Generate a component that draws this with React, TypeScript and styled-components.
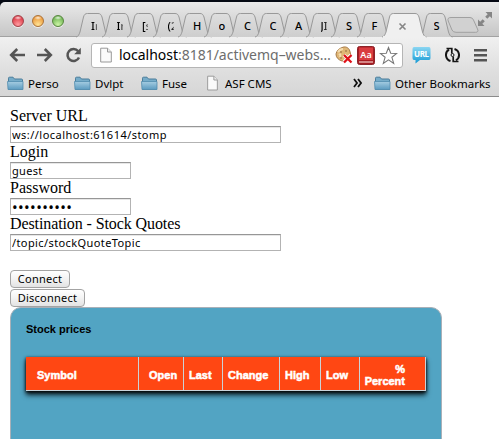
import React from "react";
import styled, { createGlobalStyle } from "styled-components";

const GlobalStyle = createGlobalStyle`
  * { box-sizing: border-box; }
  html, body { margin: 0; padding: 0; background: #fff; overflow: hidden; }
`;

const uiFont = `"Noto Sans", "Open Sans", sans-serif`;

const Window = styled.div`
  width: 499px;
  height: 439px;
  overflow: hidden;
  background: #fff;
  font-family: ${uiFont};
  color: #000;
`;

const Desktop = styled.div`
  height: 37px;
  padding-top: 2px;
  background: #060a14;
`;

const TitleBar = styled.div`
  display: flex;
  align-items: flex-end;
  height: 35px;
  padding-left: 12px;
  border-top-left-radius: 5px;
  background: linear-gradient(#eaeaea, #d9d9d9 45%, #c5c5c5);
  box-shadow: inset 0 -1px #a2a2a2;
`;

const Lights = styled.div`
  display: flex;
  gap: 8px;
  width: 68px;
  padding-bottom: 10px;
`;

const Light = styled.i<{ $rim: string; $mid: string; $glow: string }>`
  width: 12px;
  height: 12px;
  border-radius: 50%;
  border: 1px solid ${(p) => p.$rim};
  background: radial-gradient(ellipse 4px 2px at 50% 18%, #fffc, #fff0),
    radial-gradient(circle at 50% 85%, ${(p) => p.$glow}, ${(p) => p.$mid} 75%);
  box-shadow: 0 1px 0 #eee;
`;

const Tab = styled.div<{ $active?: boolean }>`
  position: relative;
  flex: none;
  width: ${(p) => (p.$active ? 36.5 : 25.5)}px;
  height: 24px;
  z-index: ${(p) => (p.$active ? 1 : 0)};
`;

const TabShape = styled.svg`
  position: absolute;
  left: -4px;
  top: 0;
  overflow: visible;
`;

const TabLabel = styled.span<{ $fade?: boolean }>`
  position: relative;
  display: block;
  width: 9px;
  height: 24px;
  margin-left: 11px;
  overflow: hidden;
  font-size: 11px;
  font-weight: 500;
  line-height: 25px;
  white-space: nowrap;
  ${(p) => p.$fade && "width: 6px; mask-image: linear-gradient(90deg, #000 65%, #0006);"}
`;

const CloseIcon = styled.svg`
  position: relative;
  display: block;
  margin: 9px 0 0 12px;
`;

const NewTab = styled.svg`
  flex: none;
  margin: 0 -2px 4px -1px;
`;

const Expand = styled.svg`
  flex: none;
  margin-bottom: 10px;
`;

const Chrome = styled.div`
  height: 60px;
  background: linear-gradient(#f0f0f0, #dedede 60%, #d6d6d6);
  border-bottom: 1px solid #8b8b8b;
`;

const Toolbar = styled.div`
  display: flex;
  align-items: center;
  height: 36px;
  padding: 0 9px;
`;

const NavIcons = styled.div`
  display: flex;
  gap: 12px;
  width: 82px;
`;

const Omnibox = styled.div`
  display: flex;
  align-items: center;
  flex: none;
  width: 312px;
  height: 25px;
  padding: 0 4px 0 8px;
  background: #fff;
  border: 1px solid #b5b5b5;
  border-radius: 3px;
`;

const Address = styled.div`
  flex: 1;
  min-width: 0;
  margin-left: 7px;
  font-size: 14px;
  letter-spacing: -0.02px;
  line-height: 20px;
  white-space: nowrap;
  color: #6d6d6d;
`;

const Host = styled.span`
  color: #000;
`;

const OmniActions = styled.div`
  display: flex;
  align-items: center;
  gap: 4px;
`;

const Extensions = styled.div`
  display: flex;
  align-items: center;
  gap: 14px;
  margin-left: 9px;
`;

const Bookmarks = styled.div`
  display: flex;
  align-items: center;
  height: 20px;
  padding-left: 7px;
`;

const Bookmark = styled.div<{ $w: number; $space?: number }>`
  display: flex;
  align-items: center;
  flex: none;
  gap: 4px;
  width: ${(p) => p.$w}px;
  font-size: 11.5px;
  letter-spacing: ${(p) => p.$space ?? 0}px;
  white-space: nowrap;
`;

const Page = styled.main`
  padding: 10px 0 0 10px;
`;

const Field = styled.label<{ $space?: number }>`
  display: block;
  height: 36px;
  font: 16px/18px "Liberation Serif", serif;
  letter-spacing: ${(p) => p.$space ?? 0}px;
`;

const Input = styled.input<{ $w: number; $space?: number; $dots?: boolean }>`
  display: block;
  width: ${(p) => p.$w}px;
  height: 17px;
  margin-top: 1px;
  padding: 0 1px;
  border: 1px solid #b3b3b3;
  border-top-color: #969696;
  border-radius: 0;
  outline: none;
  box-shadow: inset 0 1px #e7e7e7;
  font: ${(p) => (p.$dots ? 15 : 11)}px/15px ${uiFont};
  letter-spacing: ${(p) => p.$space ?? 0}px;
  color: #000;
`;

const Buttons = styled.div`
  display: flex;
  flex-direction: column;
  align-items: flex-start;
  gap: 1px;
  padding-top: 19px;
`;

const Button = styled.button<{ $w: number }>`
  width: ${(p) => p.$w}px;
  height: 18px;
  padding: 0;
  border: 1px solid #a3a3a3;
  border-radius: 4px;
  background: linear-gradient(#fff, #f3f3f3 50%, #e3e3e3);
  font: 11px/16px ${uiFont};
  letter-spacing: 0.25px;
  color: #000;
`;

const Panel = styled.section`
  width: 432px;
  height: 150px;
  padding: 15px 15px 0;
  border: 1px solid #a9b0b8;
  border-radius: 11px;
  background: #52a4c3;
  font: bold 11px/12px "Liberation Sans", Arial, sans-serif;
`;

const PanelTitle = styled.h2`
  margin: 0 0 22px;
  font: inherit;
  line-height: 13px;
`;

const Header = styled.div`
  display: grid;
  grid-template-columns: 113px 45px 39px 57px 41px 39px 66px;
  width: 400px;
  height: 34px;
  margin-top: -1px;
  background: #ff4713;
  border-bottom: 1px solid #c9d3da;
  box-shadow: 0 4px 5px #000c, 0 1px 3px #000;
`;

const Cell = styled.div<{ $pad?: number; $right?: boolean }>`
  display: flex;
  align-items: center;
  justify-content: ${(p) => (p.$right ? "flex-end" : "flex-start")};
  padding: 3px ${(p) => (p.$right ? 20 : 0)}px 0 ${(p) => (p.$right ? 0 : p.$pad ?? 5)}px;
  border-right: 1px solid #cbd2d6;
  color: #fff;
  text-align: ${(p) => (p.$right ? "right" : "left")};
  -webkit-text-stroke: 0.5px #fff;
`;

const tabFill = (active?: boolean) => (active ? "#f0f0f0" : "url(#tabg)");

function BrowserTab({ text, active }: { text?: string; active?: boolean }) {
  const w = active ? 36.5 : 25.5;
  const d = `M0 24 C2.5 23.5 3 21.5 4 19 L7.5 4 C8.3 1.3 9.5 .5 11.5 .5 H${w - 3.5} C${w - 1.5} .5 ${w - 0.5} 1.3 ${w + 0.5} 4 L${w + 4} 19 C${w + 5} 21.5 ${w + 5.5} 23.5 ${w + 8} 24`;
  return (
    <Tab $active={active}>
      <TabShape width={w + 8} height="24">
        <defs>
          <linearGradient id="tabg" x1="0" y1="0" x2="0" y2="1">
            <stop offset="0" stopColor="#dedede" />
            <stop offset="1" stopColor="#cecece" />
          </linearGradient>
        </defs>
        <path d={d} fill={tabFill(active)} stroke="#999" />
        {active && <path d={`M1 24H${w + 7}`} stroke="#f0f0f0" strokeWidth="2" />}
      </TabShape>
      {active ? (
        <CloseIcon width="9" height="9" viewBox="0 0 9 9">
          <path d="M1.5 1.5 7.5 7.5M7.5 1.5 1.5 7.5" stroke="#858585" strokeWidth="1.6" />
        </CloseIcon>
      ) : (
        <TabLabel $fade={(text ?? "").length > 1}>{text}</TabLabel>
      )}
    </Tab>
  );
}

const Folder = () => (
  <svg width="17" height="15" viewBox="0 0 17 15">
    <defs>
      <linearGradient id="fold" x1="0" y1="0" x2="0" y2="1">
        <stop offset="0" stopColor="#a6cde2" />
        <stop offset="1" stopColor="#5c9bc0" />
      </linearGradient>
    </defs>
    <path d="M1.5 13V2.2Q1.5 1.2 2.5 1.2H6L7.5 3H14.5Q15.5 3 15.5 4V13Z" fill="#76acc9" stroke="#4b7d9b" />
    <path d="M.5 5.5H16V13.5H1Z" fill="url(#fold)" stroke="#508bad" strokeWidth=".8" />
  </svg>
);

const Doc = ({ w = 12 }: { w?: number }) => (
  <svg width={w} height="16" viewBox="0 0 12 16" preserveAspectRatio="none">
    <path d="M.7 1.2H7.5L11.3 5V15H.7Z" fill="#fafafa" stroke="#999" />
    <path d="M7.5 1.2V5H11.3" fill="#eee" stroke="#999" />
  </svg>
);

const tabs = ["Ir", "Ir", "[s", "(2", "H", "o", "C", "C", "A", "JI", "S", "F"];

export default function App() {
  return (
    <Window>
      <GlobalStyle />
      <Desktop>
        <TitleBar>
          <Lights>
            <Light $rim="#a34148" $mid="#dd3c48" $glow="#ff9ba0" />
            <Light $rim="#ac7339" $mid="#eb9a3c" $glow="#ffe395" />
            <Light $rim="#58863f" $mid="#70b554" $glow="#ccf5a5" />
          </Lights>
          {tabs.map((t, i) => (
            <BrowserTab key={i} text={t} />
          ))}
          <BrowserTab active />
          <BrowserTab text="S" />
          <NewTab width="32" height="16" viewBox="0 0 32 16">
            <path d="M4 .5H23Q25.5.5 26.5 3L30.5 12Q32 15.3 28.5 15.3H9Q6 15.3 5 13L1.2 4Q0 .5 4 .5Z" fill="#d1d1d1" stroke="#a0a0a0" />
          </NewTab>
          <Expand width="16" height="16" viewBox="0 0 16 16">
            <path d="M8.5 1H15V7.5L12.8 5.3 10.3 7.8 8.2 5.7 10.7 3.2ZM7.5 15H1V8.5L3.2 10.7 5.7 8.2 7.8 10.3 5.3 12.8Z" fill="#858585" />
          </Expand>
        </TitleBar>
      </Desktop>
      <Chrome>
        <Toolbar>
          <NavIcons>
            <svg width="16" height="16" viewBox="0 0 16 16">
              <path d="M16 8H3M8.2 2 2.2 8 8.2 14" fill="none" stroke="#555" strokeWidth="2.6" />
            </svg>
            <svg width="16" height="16" viewBox="0 0 16 16">
              <path d="M0 8H13M7.8 2 13.8 8 7.8 14" fill="none" stroke="#555" strokeWidth="2.6" />
            </svg>
            <svg width="17" height="16" viewBox="0 0 17 16">
              <path d="M13.2 4.2A6 6 0 1 0 14 10.5" fill="none" stroke="#555" strokeWidth="2.5" />
              <path d="M15.8.8V7.2H9.2Z" fill="#555" />
            </svg>
          </NavIcons>
          <Omnibox>
            <Doc />
            <Address>
              <Host>localhost</Host>:8181/activemq–webs…
            </Address>
            <OmniActions>
              <svg width="18" height="18" viewBox="0 0 18 18">
                <path d="M8 1.2C11 .2 14 2 14.8 5Q17 9 14 12T7 15Q1 13 1 8 2 3 8 1.2" fill="#dfb675" stroke="#a77a46" />
                <path d="M3 6Q5 3 8 3M4 9Q6 7 5 11" stroke="#f5dcaf" strokeWidth="2" fill="none" />
                <g fill="#8a6139"><circle cx="6" cy="6" r=".8" /><circle cx="11" cy="5" r=".8" /><circle cx="6" cy="12" r=".8" /></g>
                <path d="m9 9 7 7M16 9 9 16" stroke="#fff" strokeWidth="3.6" />
                <path d="m9 9 7.5 7.5M16.5 9 9 16.5" stroke="#df1018" strokeWidth="2.3" />
              </svg>
              <svg width="18" height="19" viewBox="0 0 18 19">
                <rect x=".5" y=".5" width="17" height="18" rx="2" fill="#a61d23" stroke="#8e2328" />
                <path d="M2 1.5H16V14H2Z" fill="#d93c40" />
                <path d="M2 16H16" stroke="#efc0bd" strokeWidth="1.3" />
                <text x="9" y="11.5" textAnchor="middle" fontFamily="Noto Sans, sans-serif" fontSize="9" fontWeight="600" fill="#fff">Aa</text>
              </svg>
              <svg width="19" height="19" viewBox="0 0 19 19">
                <path d="m9.5 1.5 2.2 5.7 6 .2-4.8 3.9 1.8 6.1-5.2-3.5-5.2 3.5 1.8-6.1L1.3 7.4l6-.2Z" fill="#fff" stroke="#777" strokeWidth="1.1" />
              </svg>
            </OmniActions>
          </Omnibox>
          <Extensions>
            <svg width="19" height="18" viewBox="0 0 19 18">
              <defs>
                <linearGradient id="url" x1="0" y1="0" x2="0" y2="1">
                  <stop offset="0" stopColor="#8bd6f2" />
                  <stop offset="1" stopColor="#159ad4" />
                </linearGradient>
              </defs>
              <path d="M2 1H17Q18.5 1 18.5 3V12Q18.5 14 17 14H8L3.5 17.5V14H2Q.5 14 .5 12V3Q.5 1 2 1Z" fill="url(#url)" />
              <text x="9.5" y="10.6" textAnchor="middle" textLength="15" fontFamily="Noto Sans, sans-serif" fontSize="8" fontWeight="700" fill="#fff">URL</text>
            </svg>
            <svg width="15" height="16" viewBox="0 0 15 16">
              <path d="M5.5 14A6.3 6.3 0 0 1 4 2.6M9.5 2A6.3 6.3 0 0 1 11 13.4" fill="none" stroke="#151515" strokeWidth="2" />
              <path d="M1.5 1.5H6.8V6.5M13.5 14.5H8.2V9.5" fill="none" stroke="#151515" strokeWidth="1.7" />
              <circle cx="7.5" cy="8" r="1.5" fill="none" stroke="#151515" />
            </svg>
            <svg width="13" height="14" viewBox="0 0 13 14">
              <path d="M0 2.2H13M0 7.2H13M0 12.2H13" stroke="#555" strokeWidth="2.6" />
            </svg>
          </Extensions>
        </Toolbar>
        <Bookmarks>
          <Bookmark $w={67}><Folder />Perso</Bookmark>
          <Bookmark $w={67}><Folder />Dvlpt</Bookmark>
          <Bookmark $w={66}><Folder />Fuse</Bookmark>
          <Bookmark $w={146}><Doc w={11} /><span>&nbsp;ASF CMS</span></Bookmark>
          <Bookmark $w={21}>
            <svg width="9" height="10" viewBox="0 0 9 10">
              <path d="m1 1 3 4-3 4M5 1l3 4-3 4" fill="none" stroke="#111" strokeWidth="1.8" />
            </svg>
          </Bookmark>
          <Bookmark $w={122}><Folder />Other Bookmarks</Bookmark>
        </Bookmarks>
      </Chrome>
      <Page>
        <Field>Server URL<Input $w={271} $space={0.46} readOnly value="ws://localhost:61614/stomp" /></Field>
        <Field>Login<Input $w={121} $space={0.3} readOnly value="guest" /></Field>
        <Field>Password<Input $w={121} $dots $space={0.4} readOnly value="••••••••••" /></Field>
        <Field $space={-0.1}>Destination - Stock Quotes<Input $w={271} $space={0.4} readOnly value="/topic/stockQuoteTopic" /></Field>
        <Buttons>
          <Button $w={60}>Connect</Button>
          <Button $w={75}>Disconnect</Button>
        </Buttons>
        <Panel>
          <PanelTitle>Stock prices</PanelTitle>
          <Header>
            <Cell $pad={11}>Symbol</Cell>
            <Cell $pad={10}>Open</Cell>
            <Cell>Last</Cell>
            <Cell>Change</Cell>
            <Cell>High</Cell>
            <Cell>Low</Cell>
            <Cell $right>%<br />Percent</Cell>
          </Header>
        </Panel>
      </Page>
    </Window>
  );
}
